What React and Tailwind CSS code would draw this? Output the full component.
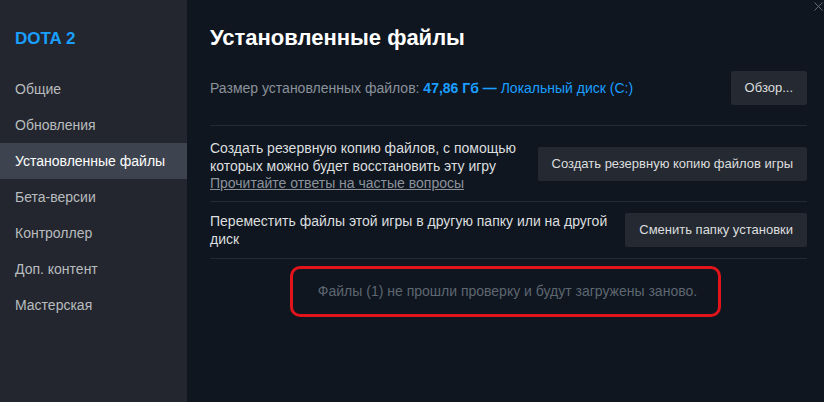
import { X } from "lucide-react";

const menu = [
  "Общие",
  "Обновления",
  "Установленные файлы",
  "Бета-версии",
  "Контроллер",
  "Доп. контент",
  "Мастерская",
];

const Sidebar = () => {
  return (
    <div className="w-[187px] shrink-0 bg-[#23262e] pt-[28px]">
      <div className="px-[15px] text-[17px] font-bold leading-[22px] text-[#1a9fff]">DOTA 2</div>
      <div className="mt-[21px] flex flex-col">
        {menu.map((item, index) => {
          return (
            <div
              key={index}
              className={`flex h-[36px] items-center px-[15px] text-[14px] ${
                item === "Установленные файлы" ? "bg-[#3d4450] text-white" : "text-[#b8bcbf]"
              }`}
            >
              {item}
            </div>
          );
        })}
      </div>
    </div>
  );
};

const Button = ({ children }) => {
  return (
    <div className="shrink-0 rounded-[2px] bg-[#252a32] px-[14px] py-[9px] text-[13px] leading-[16px] text-[#dcdedf]">
      {children}
    </div>
  );
};

export default function App() {
  return (
    <div
      className="flex h-[402px] w-[824px] overflow-hidden bg-[#0f1620]"
      style={{ fontFamily: '"Liberation Sans", Arial, sans-serif' }}
    >
      <Sidebar />
      <div className="relative flex-1 pl-[23px] pr-[17px]">
        <X className="absolute right-[-2px] top-[-1px] h-[15px] w-[15px] text-[#6b717a]" strokeWidth={1.5} />
        <h1 className="pt-[25px] text-[22px] font-bold leading-[26px] text-white">Установленные файлы</h1>

        <div className="mt-[20px] flex items-center justify-between pb-[20px] text-[14px]">
          <div className="text-[#8b929a]">
            Размер установленных файлов:{" "}
            <span className="font-bold text-[#1a9fff]">47,86 Гб —</span>{" "}
            <span className="text-[#1a9fff]">Локальный диск (C:)</span>
          </div>
          <Button>Обзор...</Button>
        </div>

        <div className="flex items-start justify-between border-t border-[#232a33] pt-[14px] pb-[8px] text-[14px] leading-[17.5px]">
          <div className="text-[#dcdedf]">
            <div>Создать резервную копию файлов, с помощью</div>
            <div>которых можно будет восстановить эту игру</div>
            <div className="text-[#8b929a] underline">Прочитайте ответы на частые вопросы</div>
          </div>
          <div className="mt-[7px]">
            <Button>Создать резервную копию файлов игры</Button>
          </div>
        </div>

        <div className="flex items-center justify-between border-t border-b border-[#232a33] py-[10px] text-[14px] leading-[18px]">
          <div className="w-[405px] text-[#dcdedf]">
            Переместить файлы этой игры в другую папку или на другой диск
          </div>
          <Button>Сменить папку установки</Button>
        </div>

        <div className="mt-[7px] flex justify-center">
          <div className="ml-[-6px] flex h-[51px] w-[431px] items-center justify-center rounded-[10px] border-[3px] border-[#e0141a] pl-[4px] text-[14px] text-[#5e6670]">
            Файлы (1) не прошли проверку и будут загружены заново.
          </div>
        </div>
      </div>
    </div>
  );
}
